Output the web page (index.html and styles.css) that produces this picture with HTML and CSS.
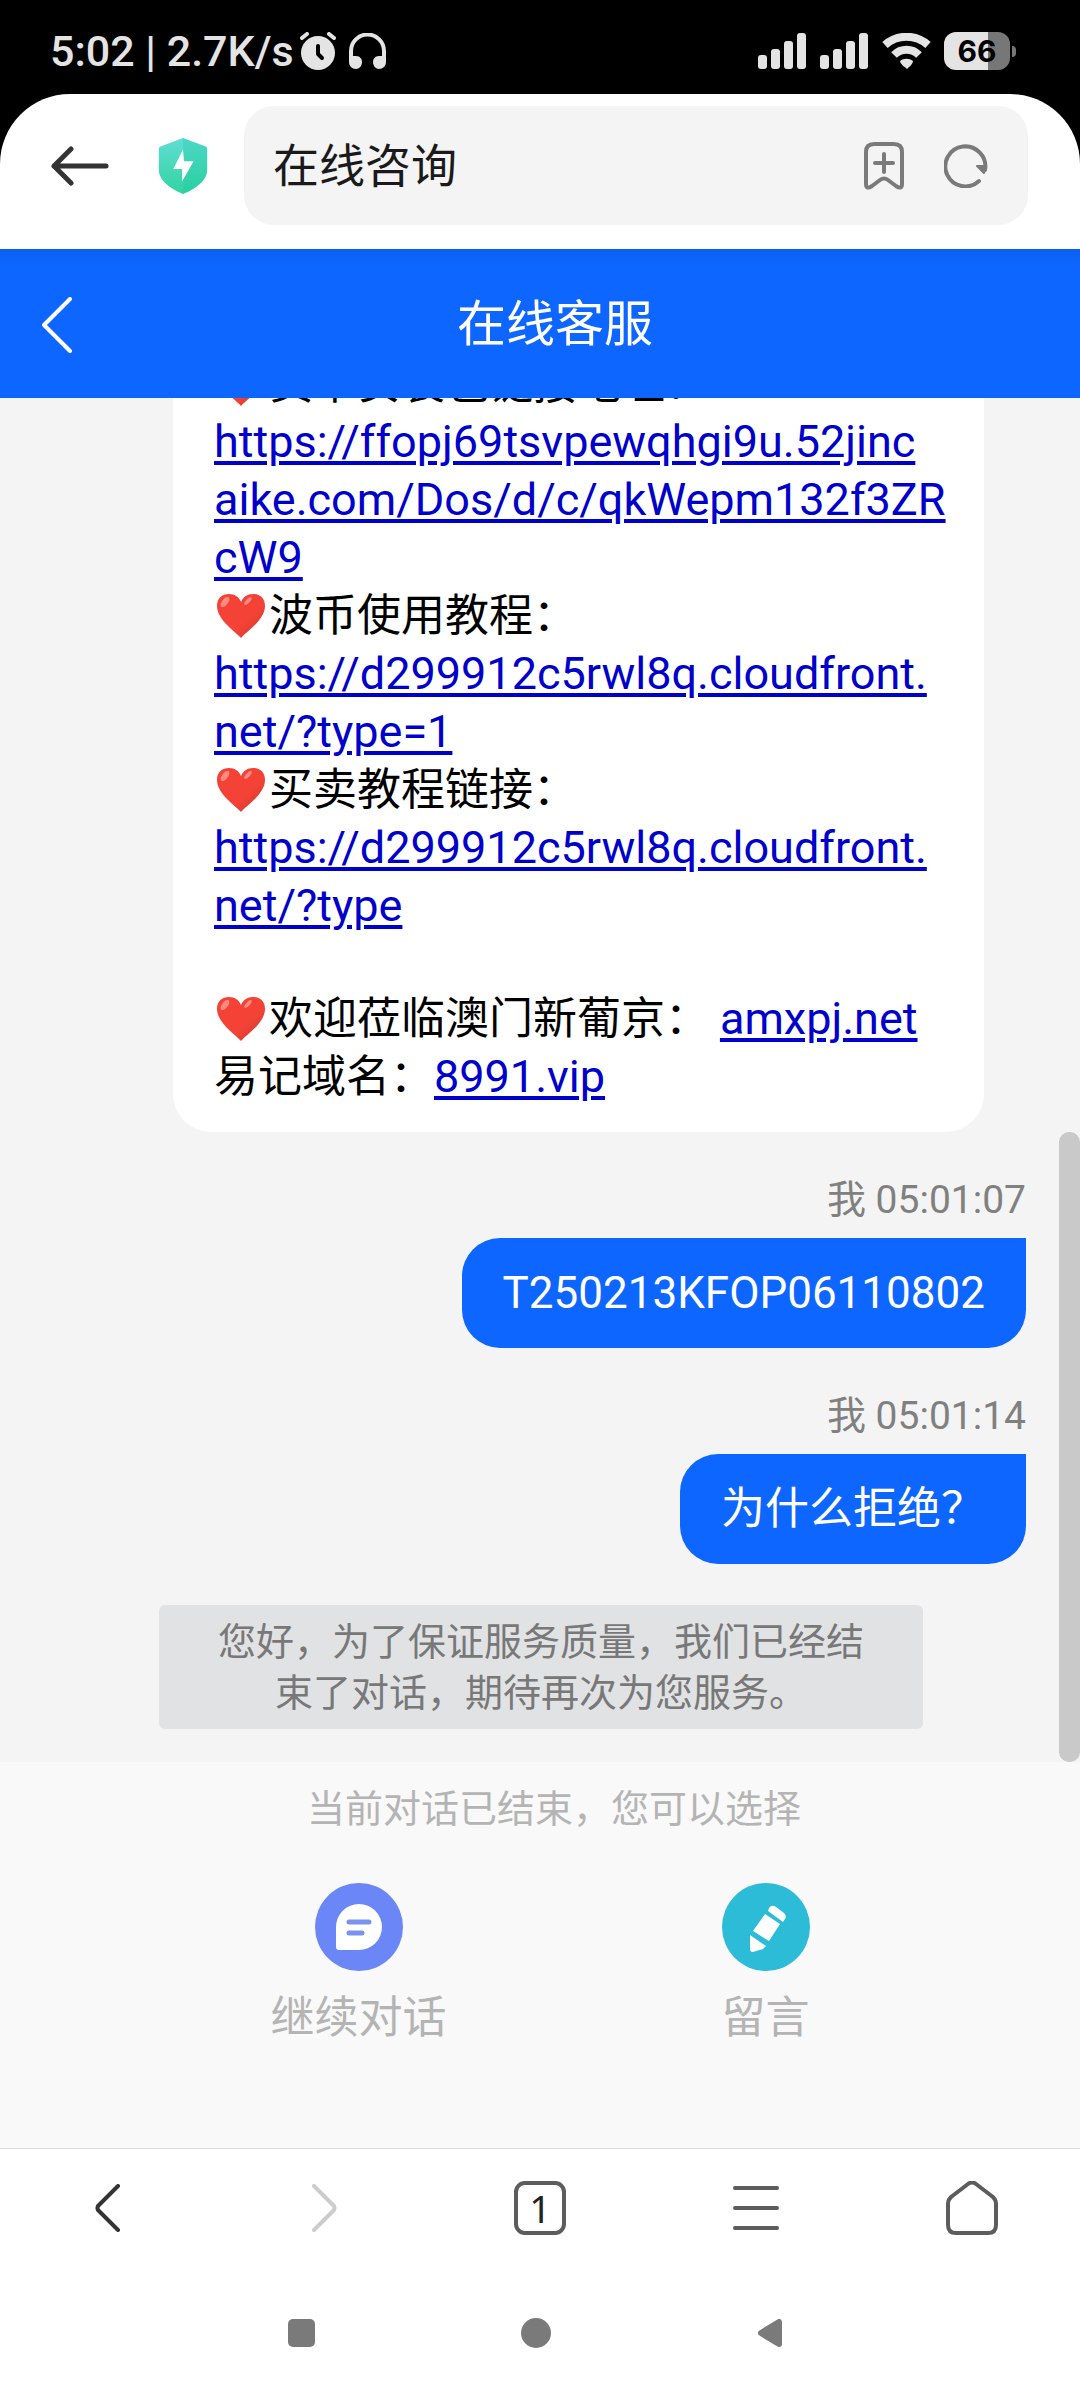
FILE: index.html
```html
<!DOCTYPE html>
<html lang="zh-CN">
<head>
<meta charset="utf-8">
<meta name="viewport" content="width=device-width, initial-scale=1">
<title>在线咨询</title>
<link rel="stylesheet" href="styles.css">
</head>
<body>
<svg class="defs" aria-hidden="true">
  <defs>
    <linearGradient id="heartFill" x1="0" y1="0" x2="1" y2="1">
      <stop offset="0.6" stop-color="#f44336"/>
      <stop offset="1" stop-color="#c8372f"/>
    </linearGradient>
    <symbol id="heart" viewBox="0 0 50 45">
      <path fill="url(#heartFill)" d="M25 45C20 39 1 27 1 13 1 5 6 1 13 1c6 0 10 3 12 8 2-5 6-8 12-8 7 0 12 4 12 12 0 14-19 26-24 32z"/>
      <ellipse cx="9" cy="9" rx="3" ry="6" transform="rotate(38 9 9)" fill="#ff8a80"/>
      <ellipse cx="32" cy="8" rx="2" ry="5" transform="rotate(42 32 8)" fill="#ff8a80"/>
    </symbol>
    <symbol id="signal" viewBox="0 0 49 36">
      <rect x="0" y="22" width="9" height="14" rx="3"/>
      <rect x="13" y="16" width="9" height="20" rx="3"/>
      <rect x="26" y="8" width="9" height="28" rx="3"/>
      <rect x="39" y="0" width="9" height="36" rx="3"/>
    </symbol>
  </defs>
</svg>
<div class="screen">
  <div class="status">
    <span class="status-time">5:02 | 2.7K/s</span>
    <svg class="alarm" width="36" height="38" viewBox="0 0 36 38">
      <circle cx="18" cy="21" r="17" fill="#e4e4e4"/>
      <path d="M2 6l5-4M34 6l-5-4" stroke="#e4e4e4" stroke-width="4" stroke-linecap="round"/>
      <path d="M18 14v8l4 4" fill="none" stroke="#000" stroke-width="4" stroke-linecap="round" stroke-linejoin="round"/>
    </svg>
    <svg class="headphones" width="37" height="36" viewBox="0 0 37 36">
      <path d="M2 28V18a16 16 0 0 1 33 0v10" fill="none" stroke="#e4e4e4" stroke-width="4"/>
      <path d="M0 23h7c4 0 6 3 6 6s-2 7-6 7-7-3-7-7zM37 23h-7c-4 0-6 3-6 6s2 7 6 7 7-3 7-7z" fill="#e4e4e4"/>
    </svg>
    <span class="status-right">
      <svg width="49" height="36" fill="#e4e4e4"><use href="#signal"/></svg>
      <svg width="49" height="36" fill="#e4e4e4"><use href="#signal"/></svg>
      <svg width="49" height="36" viewBox="0 0 49 36">
        <path d="M3 12C15 1 34 1 46 12" fill="none" stroke="#e4e4e4" stroke-width="8"/>
        <path d="M12 22C19 15 30 15 37 22" fill="none" stroke="#e4e4e4" stroke-width="8"/>
        <path d="M18 28c4-3 9-3 13 0 0 3-4 6-6 8-2-2-7-5-7-8z" fill="#e4e4e4"/>
      </svg>
      <span class="battery">66</span>
    </span>
  </div>

  <header class="toolbar">
    <button class="icon-button" type="button" aria-label="返回">
      <svg width="58" height="40" viewBox="0 0 58 40" fill="none" stroke="#333" stroke-width="5" stroke-linecap="round" stroke-linejoin="round"><path d="M55 20H3M20 3L3 20l17 17"/></svg>
    </button>
    <svg class="shield" width="52" height="58" viewBox="0 0 52 60">
      <defs>
        <linearGradient id="shieldFill" x1="0" y1="0" x2="0" y2="1"><stop offset="0" stop-color="#62dcd4"/><stop offset="1" stop-color="#30d4a0"/></linearGradient>
      </defs>
      <path d="M26 1L50 10Q51 11 51 12V34C51 46 38 54 26 59 14 54 1 46 1 34V12Q1 11 2 10z" fill="url(#shieldFill)"/>
      <path d="M26 1L50 10Q51 11 51 12V34C51 46 38 54 26 59z" fill="#10c8a0" fill-opacity="0.25"/>
      <path d="M26 13L16 33h9v13l12-21h-10z" fill="#fff"/>
    </svg>
    <div class="address">
      <span class="address-text">在线咨询</span>
      <button class="icon-button" type="button" aria-label="添加书签">
        <svg width="42" height="48" viewBox="0 0 42 48" fill="none" stroke="#7a7a7a" stroke-width="4" stroke-linecap="round" stroke-linejoin="round"><path d="M3 10Q3 2 11 2H31Q39 2 39 10V42Q39 48 33 44L25 38Q21 35 17 38L9 44Q3 48 3 42zM21 12v18M12 21h18"/></svg>
      </button>
      <button class="icon-button" type="button" aria-label="刷新">
        <svg width="44" height="44" viewBox="0 0 44 44" fill="none" stroke="#7a7a7a" stroke-width="4" stroke-linecap="round"><path d="M35 37A20 20 0 1 1 41 26"/><path d="M33 22h9l-2 7z" fill="#7a7a7a" stroke-width="2" stroke-linejoin="round"/></svg>
      </button>
    </div>
  </header>

  <div class="chat-header">
    <button class="icon-button" type="button" aria-label="返回上一页">
      <svg width="30" height="56" viewBox="0 0 30 56" fill="none" stroke="#fff" stroke-width="4" stroke-linecap="round" stroke-linejoin="round"><path d="M28 2L2 28l26 26"/></svg>
    </button>
    <h1>在线客服</h1>
  </div>

  <main class="chat">
    <div class="bubble received">
      <p>
        <svg class="heart"><use href="#heart"/></svg>货币安装包链接地址：<br>
        <a href="#app">https://ffopj69tsvpewqhgi9u.52jinc<br>aike.com/Dos/d/c/qkWepm132f3ZR<br>cW9</a><br>
        <svg class="heart"><use href="#heart"/></svg>波币使用教程：<br>
        <a href="#guide">https://d299912c5rwl8q.cloudfront.<br>net/?type=1</a><br>
        <svg class="heart"><use href="#heart"/></svg>买卖教程链接：<br>
        <a href="#trade">https://d299912c5rwl8q.cloudfront.<br>net/?type</a>
      </p>
      <p>
        <svg class="heart"><use href="#heart"/></svg>欢迎莅临澳门新葡京： <a href="#site">amxpj.net</a><br>
        易记域名：<a href="#domain">8991.vip</a>
      </p>
    </div>
    <div class="message">
      <span class="stamp">我 05:01:07</span>
      <div class="bubble sent">T250213KFOP06110802</div>
    </div>
    <div class="message">
      <span class="stamp">我 05:01:14</span>
      <div class="bubble sent">为什么拒绝？</div>
    </div>
    <p class="notice">您好，为了保证服务质量，我们已经结束了对话，期待再次为您服务。</p>
    <span class="scroll-thumb"></span>
  </main>

  <section class="ended">
    <p class="ended-hint">当前对话已结束，您可以选择</p>
    <div class="choices">
      <button class="choice" type="button">
        <svg width="88" height="88" viewBox="0 0 88 88">
          <circle cx="44" cy="44" r="44" fill="#6a86f7"/>
          <path d="M21 44a23 23 0 1 1 23 23H24q-3 0-3-3z" fill="#fff"/>
          <path d="M34 39h20M34 50h13" stroke="#7a93ee" stroke-width="5" stroke-linecap="round"/>
        </svg>
        继续对话
      </button>
      <button class="choice" type="button">
        <svg width="88" height="88" viewBox="0 0 88 88">
          <circle cx="44" cy="44" r="44" fill="#2cbcd8"/>
          <g fill="#fff">
            <path d="M47 25q3-4 7-1l8 6q3 3 1 6l-2 3-15-11z"/>
            <path d="M43 31l15 10-11 17-16-10z"/>
            <path d="M28 52l16 11-3 3-10 3q-3 0-3-3z"/>
          </g>
        </svg>
        留言
      </button>
    </div>
  </section>

  <nav class="tabs">
    <button class="icon-button" type="button" aria-label="后退">
      <svg width="26" height="48" viewBox="0 0 26 48" fill="none" stroke="#333" stroke-width="4" stroke-linecap="round" stroke-linejoin="round"><path d="M23 2L3 22q-1 2 0 4l20 20"/></svg>
    </button>
    <button class="icon-button" type="button" aria-label="前进">
      <svg width="26" height="48" viewBox="0 0 26 48" fill="none" stroke="#ccc" stroke-width="4" stroke-linecap="round" stroke-linejoin="round"><path d="M3 2l20 20q1 2 0 4L3 46"/></svg>
    </button>
    <button class="icon-button" type="button" aria-label="标签页"><span class="tab-count">1</span></button>
    <button class="icon-button" type="button" aria-label="菜单">
      <svg width="48" height="44" viewBox="0 0 48 44" stroke="#5c5c5c" stroke-width="4" stroke-linecap="round"><path d="M3 2h42M3 22h42M3 42h42"/></svg>
    </button>
    <button class="icon-button" type="button" aria-label="主页">
      <svg width="52" height="54" viewBox="0 0 52 54" fill="none" stroke="#5c5c5c" stroke-width="4" stroke-linejoin="round"><path d="M22 3q4-3 8 0l17 13q3 3 3 6V44q0 8-8 8H10q-8 0-8-8V22q0-3 3-6z"/></svg>
    </button>
  </nav>

  <nav class="system">
    <button class="icon-button" type="button" aria-label="最近任务">
      <svg width="28" height="28" viewBox="0 0 28 28" fill="#7a7a7a"><rect width="27" height="28" rx="5"/></svg>
    </button>
    <button class="icon-button" type="button" aria-label="主屏幕">
      <svg width="30" height="30" viewBox="0 0 30 30" fill="#7a7a7a"><circle cx="15" cy="15" r="15"/></svg>
    </button>
    <button class="icon-button" type="button" aria-label="系统返回">
      <svg width="24" height="28" viewBox="0 0 24 28" fill="#7a7a7a" stroke="#7a7a7a" stroke-width="6" stroke-linejoin="round"><path d="M3 14L21 3v22z"/></svg>
    </button>
  </nav>
</div>
</body>
</html>
```
FILE: styles.css
```css
* {
  box-sizing: border-box;
}

body {
  margin: 0;
  background: #fff;
  color: #000;
  font-family: Roboto, "Noto Sans CJK SC", sans-serif;
}

h1,
p {
  margin: 0;
}

.defs {
  position: absolute;
  width: 0;
  height: 0;
}

.screen {
  display: flex;
  flex-direction: column;
  height: 100vh;
  background: #000;
}

.icon-button {
  display: flex;
  align-items: center;
  justify-content: center;
  padding: 0;
  border: 0;
  background: none;
  color: inherit;
  font: inherit;
}

/* phone status bar */
.status {
  display: flex;
  align-items: center;
  height: 94px;
  padding: 8px 70px 0 50px;
  color: #e4e4e4;
}

.status-time {
  font-size: 43px;
  font-weight: 500;
  line-height: 52px;
}

.alarm {
  margin-left: 6px;
}

.headphones {
  margin-left: 13px;
}

.status-right {
  display: flex;
  align-items: center;
  gap: 13px;
  margin-left: auto;
}

.battery {
  position: relative;
  width: 66px;
  border-radius: 12px;
  background: linear-gradient(90deg, #e4e4e4 66%, #777 66%);
  color: #000;
  font: 700 30px/38px Inter, sans-serif;
  text-align: center;
}

.battery::after {
  content: "";
  position: absolute;
  top: 14px;
  right: -6px;
  width: 4px;
  height: 11px;
  border-radius: 0 6px 6px 0;
  background: #777;
}

/* browser address bar */
.toolbar {
  display: flex;
  align-items: center;
  height: 155px;
  padding: 0 52px 12px 51px;
  border-radius: 70px 70px 0 0;
  background: #fff;
}

.shield {
  margin: 0 35px 0 48px;
}

.address {
  display: flex;
  flex: 1;
  align-items: center;
  gap: 39px;
  height: 119px;
  padding: 0 40px 0 29px;
  border-radius: 30px;
  background: #f4f4f4;
}

.address-text {
  flex: 1;
  color: #1a1a1a;
  font-size: 46px;
  line-height: 56px;
}

/* chat title */
.chat-header {
  display: flex;
  align-items: center;
  height: 149px;
  padding: 2px 42px 0;
  background: linear-gradient(#0b5ff0, #0d66ff 16px);
  color: #fff;
}

.chat-header h1 {
  flex: 1;
  font-size: 49px;
  font-weight: 400;
  line-height: 60px;
  text-align: center;
}

/* conversation */
.chat {
  position: relative;
  display: flex;
  flex: 1;
  flex-direction: column;
  justify-content: flex-end;
  min-height: 0;
  padding: 0 54px 33px;
  overflow: hidden;
  background: #f4f4f4;
}

.bubble {
  padding: 26px 41px;
  font-size: 44px;
  line-height: 58px;
}

.received {
  display: flex;
  flex-direction: column;
  gap: 55px;
  margin: 0 42px 0 119px;
  padding-right: 36px;
  border-radius: 38px;
  background: #fff;
  word-break: break-all;
}

.received a {
  color: #0000cc;
  font-size: 45px;
  line-height: 1;
  text-decoration-thickness: 4px;
  text-underline-offset: 4px;
}

.heart {
  width: 50px;
  height: 45px;
  margin: 0 3px 0 2px;
  vertical-align: -7px;
}

.message {
  display: flex;
  flex-direction: column;
  align-items: flex-end;
  padding-top: 42px;
}

.stamp {
  padding-bottom: 12px;
  color: #808080;
  font-size: 39px;
  line-height: 52px;
}

.sent {
  border-radius: 38px 0 38px 38px;
  background: #0d66ff;
  color: #fff;
}

.notice {
  margin: 41px 103px 0 105px;
  padding: 12px 55px 10px;
  border-radius: 6px;
  background: #e1e2e4;
  color: #787878;
  font-size: 38px;
  line-height: 51px;
  text-align: center;
}

.scroll-thumb {
  position: absolute;
  right: 0;
  bottom: 0;
  width: 21px;
  height: 630px;
  border-radius: 10px;
  background: #c9c9c9;
}

/* ended conversation */
.ended {
  height: 387px;
  padding-top: 22px;
  border-bottom: 1px solid #dedede;
  background: #f9f9f9;
  color: #b4b4b4;
}

.ended-hint {
  padding-left: 28px;
  font-size: 38px;
  line-height: 51px;
  text-align: center;
}

.choices {
  display: grid;
  grid-template-columns: 1fr 1fr;
  margin-top: 48px;
  padding: 0 111px 0 155px;
}

.choice {
  display: flex;
  flex-direction: column;
  align-items: center;
  gap: 18px;
  padding: 0;
  border: 0;
  background: none;
  color: inherit;
  font: inherit;
  font-size: 44px;
  line-height: 58px;
}

/* browser bottom bar */
.tabs {
  display: grid;
  grid-template-columns: repeat(5, 1fr);
  height: 118px;
  background: #fff;
}

.tab-count {
  width: 52px;
  height: 54px;
  border: 4px solid #5c5c5c;
  border-radius: 11px;
  color: #222;
  font-family: "Noto Sans", sans-serif;
  font-size: 38px;
  line-height: 46px;
}

/* system navigation */
.system {
  display: flex;
  justify-content: center;
  height: 133px;
  padding: 0 9px 2px 0;
  background: #fff;
}

.system .icon-button {
  width: 234px;
}
```
